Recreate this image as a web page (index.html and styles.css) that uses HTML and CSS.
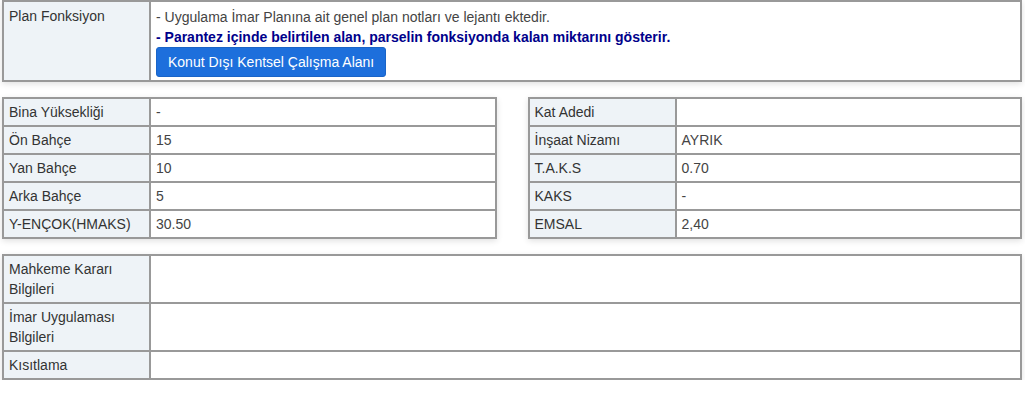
FILE: index.html
```html
<!DOCTYPE html>
<html lang="tr">
<head>
<meta charset="utf-8">
<link rel="stylesheet" href="styles.css">
</head>
<body>
<div class="page">
  <table class="info full">
    <tr>
      <th class="label top">Plan Fonksiyon</th>
      <td class="value plan">
        <div class="note">- Uygulama İmar Planına ait genel plan notları ve lejantı ektedir.</div>
        <div class="note-bold">- Parantez içinde belirtilen alan, parselin fonksiyonda kalan miktarını gösterir.</div>
        <button class="btn">Konut Dışı Kentsel Çalışma Alanı</button>
      </td>
    </tr>
  </table>

  <div class="pair">
    <table class="info half">
      <tr><th class="label">Bina Yüksekliği</th><td class="value">-</td></tr>
      <tr><th class="label">Ön Bahçe</th><td class="value">15</td></tr>
      <tr><th class="label">Yan Bahçe</th><td class="value">10</td></tr>
      <tr><th class="label">Arka Bahçe</th><td class="value">5</td></tr>
      <tr><th class="label">Y-ENÇOK(HMAKS)</th><td class="value">30.50</td></tr>
    </table>
    <table class="info half">
      <tr><th class="label">Kat Adedi</th><td class="value"></td></tr>
      <tr><th class="label">İnşaat Nizamı</th><td class="value">AYRIK</td></tr>
      <tr><th class="label">T.A.K.S</th><td class="value">0.70</td></tr>
      <tr><th class="label">KAKS</th><td class="value">-</td></tr>
      <tr><th class="label">EMSAL</th><td class="value">2,40</td></tr>
    </table>
  </div>

  <table class="info full">
    <tr><th class="label">Mahkeme Kararı<br>Bilgileri</th><td class="value"></td></tr>
    <tr><th class="label">İmar Uygulaması<br>Bilgileri</th><td class="value"></td></tr>
    <tr><th class="label">Kısıtlama</th><td class="value"></td></tr>
  </table>
</div>
</body>
</html>
```

FILE: styles.css
```css
* { box-sizing: border-box; }
html, body { margin: 0; padding: 0; background: #fff; }
body {
  font-family: "Liberation Sans", Arial, sans-serif;
  font-size: 14px;
  color: #333;
}
.page {
  padding: 0 3px 0 2px;
  display: flex;
  flex-direction: column;
  gap: 15px;
}
.info {
  border-collapse: collapse;
  border: 2px solid #999;
  box-shadow: 0 2px 6px rgba(0,0,0,0.12);
  background: #fff;
}
.full { width: 100%; }
.info th, .info td {
  border: 2px solid #999;
  text-align: left;
  font-weight: normal;
  vertical-align: middle;
  padding: 3px 6px 3px 5px;
  line-height: 20px;
  height: 28px;
}
.info .label {
  width: 147px;
  background: #eef3f7;
  color: #333;
}
.info .label.top { vertical-align: top; padding-top: 4px; }
.info .value { color: #444; }
.info td.plan { padding: 5px 6px 3px 5px; }
.plan .note { line-height: 20px; }
.plan .note-bold {
  color: #00008b;
  font-weight: bold;
  line-height: 20px;
}
.btn {
  margin-top: 0;
  background: #1d6fdc;
  color: #fff;
  border: 1px solid #1a64c7;
  border-radius: 3px;
  font-family: "Liberation Sans", Arial, sans-serif;
  font-size: 14px;
  padding: 5px 11px;
  line-height: 18px;
}
.pair {
  display: flex;
  gap: 31px;
}
.half { flex: 1; }
```
